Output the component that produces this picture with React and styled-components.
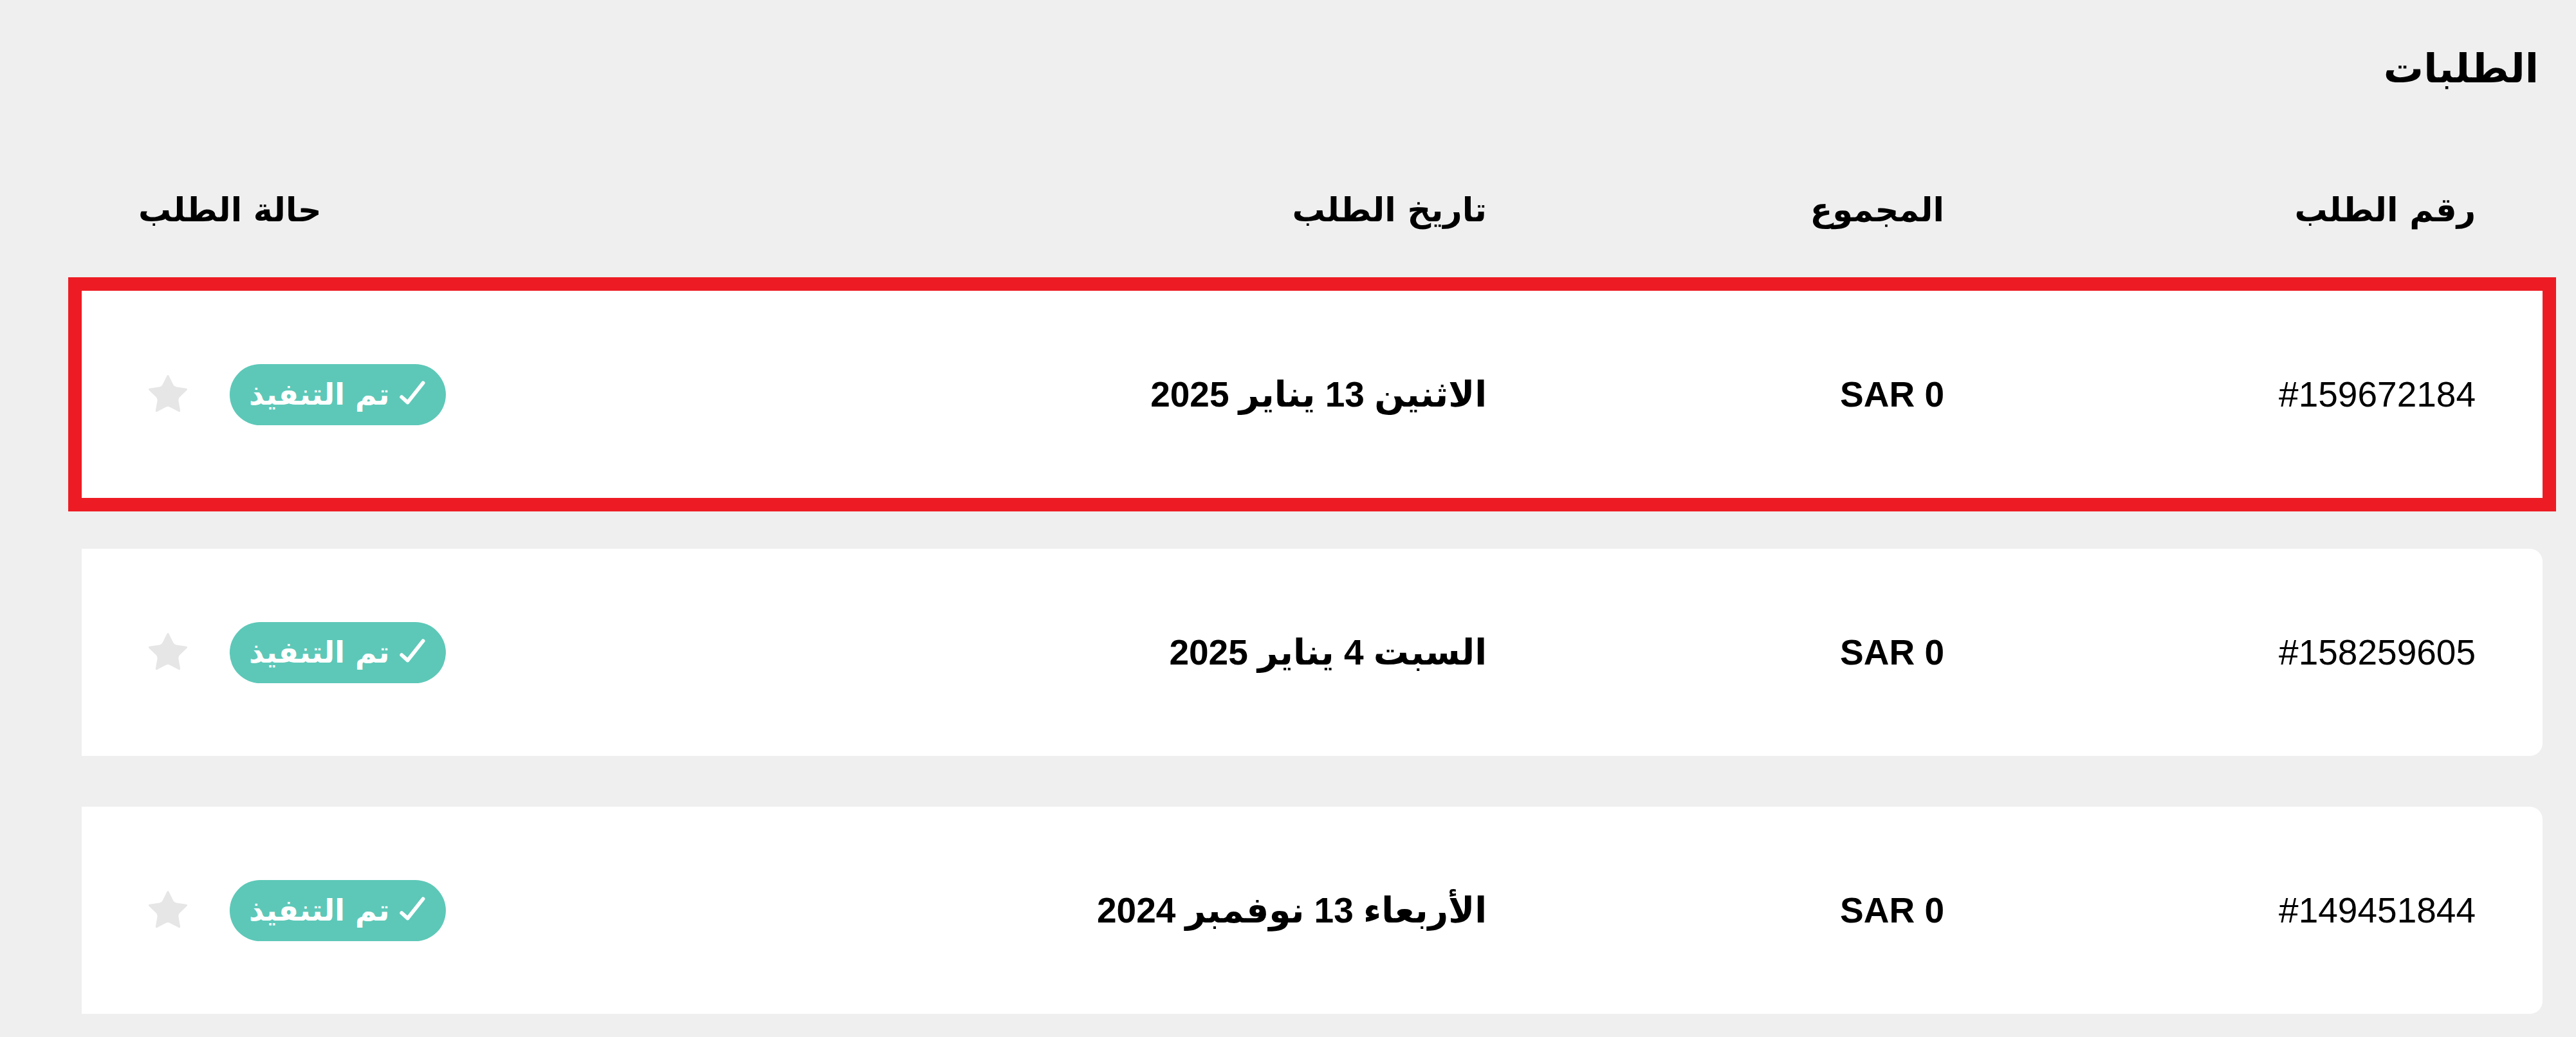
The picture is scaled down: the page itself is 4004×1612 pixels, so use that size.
import React from 'react';
import styled, { createGlobalStyle } from 'styled-components';

const orders = [
  { id: '#159672184', total: 'SAR 0', date: 'الاثنين 13 يناير 2025', status: 'تم التنفيذ', marked: true },
  { id: '#158259605', total: 'SAR 0', date: 'السبت 4 يناير 2025', status: 'تم التنفيذ' },
  { id: '#149451844', total: 'SAR 0', date: 'الأربعاء 13 نوفمبر 2024', status: 'تم التنفيذ' },
];

const StarIcon = () => (
  <svg width="72" height="72" viewBox="0 0 24 24">
    <path
      fill="#e6e6e6"
      d="M11.525 2.295a.53.53 0 0 1 .95 0l2.31 4.679a2.123 2.123 0 0 0 1.595 1.16l5.166.756a.53.53 0 0 1 .294.904l-3.736 3.638a2.123 2.123 0 0 0-.611 1.878l.882 5.14a.53.53 0 0 1-.771.56l-4.618-2.428a2.122 2.122 0 0 0-1.973 0L6.396 21.01a.53.53 0 0 1-.77-.56l.881-5.139a2.122 2.122 0 0 0-.611-1.879L2.16 9.795a.53.53 0 0 1 .294-.906l5.165-.755a2.122 2.122 0 0 0 1.597-1.16z"
    />
  </svg>
);

const CheckIcon = () => (
  <svg width="50" height="50" viewBox="0 0 24 24" fill="none">
    <path d="M3.5 14l4.5 4L19.5 3.5" stroke="#fff" strokeWidth="2.8" strokeLinecap="round" strokeLinejoin="round" />
  </svg>
);

export default function App() {
  return (
    <>
      <GlobalStyle />
      <Page>
        <Title>الطلبات</Title>

        <HeaderRow>
          <HeadCell>رقم الطلب</HeadCell>
          <HeadCell>المجموع</HeadCell>
          <HeadCell>تاريخ الطلب</HeadCell>
          <HeadCell end>حالة الطلب</HeadCell>
        </HeaderRow>

        <List>
          {orders.map(o => (
            <Card key={o.id} marked={o.marked}>
              <Cell>{o.id}</Cell>
              <Cell bold>{o.total}</Cell>
              <Cell bold>{o.date}</Cell>
              <StatusCell>
                <Badge>
                  <CheckIcon />
                  <span>{o.status}</span>
                </Badge>
                <StarIcon />
              </StatusCell>
            </Card>
          ))}
        </List>
      </Page>
    </>
  );
}

const GlobalStyle = createGlobalStyle`
  body {
    margin: 0;
    background: #efefef;
    font-family: "Liberation Sans", "DejaVu Sans", sans-serif;
    color: #000;
  }
`;

const Page = styled.div`
  direction: rtl;
  padding: 62px 52px 0 127px;
`;

const Title = styled.h1`
  margin: 0;
  padding-right: 6px;
  font-family: "DejaVu Sans", sans-serif;
  font-size: 62px;
  font-weight: 700;
  line-height: 90px;
`;

const Columns = styled.div`
  display: grid;
  grid-template-columns: 826px 711px 1fr auto;
  align-items: center;
  padding: 0 104px 0 98px;
`;

const HeaderRow = styled(Columns)`
  height: 150px;
  margin-top: 99px;
`;

const HeadCell = styled.div`
  font-family: "DejaVu Sans", sans-serif;
  font-size: 51px;
  font-weight: 700;
  justify-self: ${p => (p.end ? 'end' : 'start')};
  margin-left: ${p => (p.end ? '-10px' : '0')};
`;

const List = styled.div`
  display: flex;
  flex-direction: column;
  gap: 79px;
  margin-top: 51px;
`;

const Card = styled(Columns).withConfig({ shouldForwardProp: p => p !== 'marked' })`
  height: 322px;
  background: #fff;
  border-radius: ${p => (p.marked ? '0' : '0 20px 20px 0')};
  outline: ${p => (p.marked ? '21px solid #ed1c24' : 'none')};
`;

const Cell = styled.div.withConfig({ shouldForwardProp: p => p !== 'bold' })`
  font-size: 55px;
  font-weight: ${p => (p.bold ? 700 : 400)};
`;

const StatusCell = styled.div`
  justify-self: end;
  display: flex;
  align-items: center;
  gap: 60px;
`;

const Badge = styled.div`
  display: flex;
  align-items: center;
  gap: 12px;
  height: 95px;
  padding: 0 26px 0 30px;
  border-radius: 48px;
  background: #5dc8b8;
  color: #fff;
  font-family: "DejaVu Sans", sans-serif;
  font-size: 46px;
  font-weight: 700;
`;
